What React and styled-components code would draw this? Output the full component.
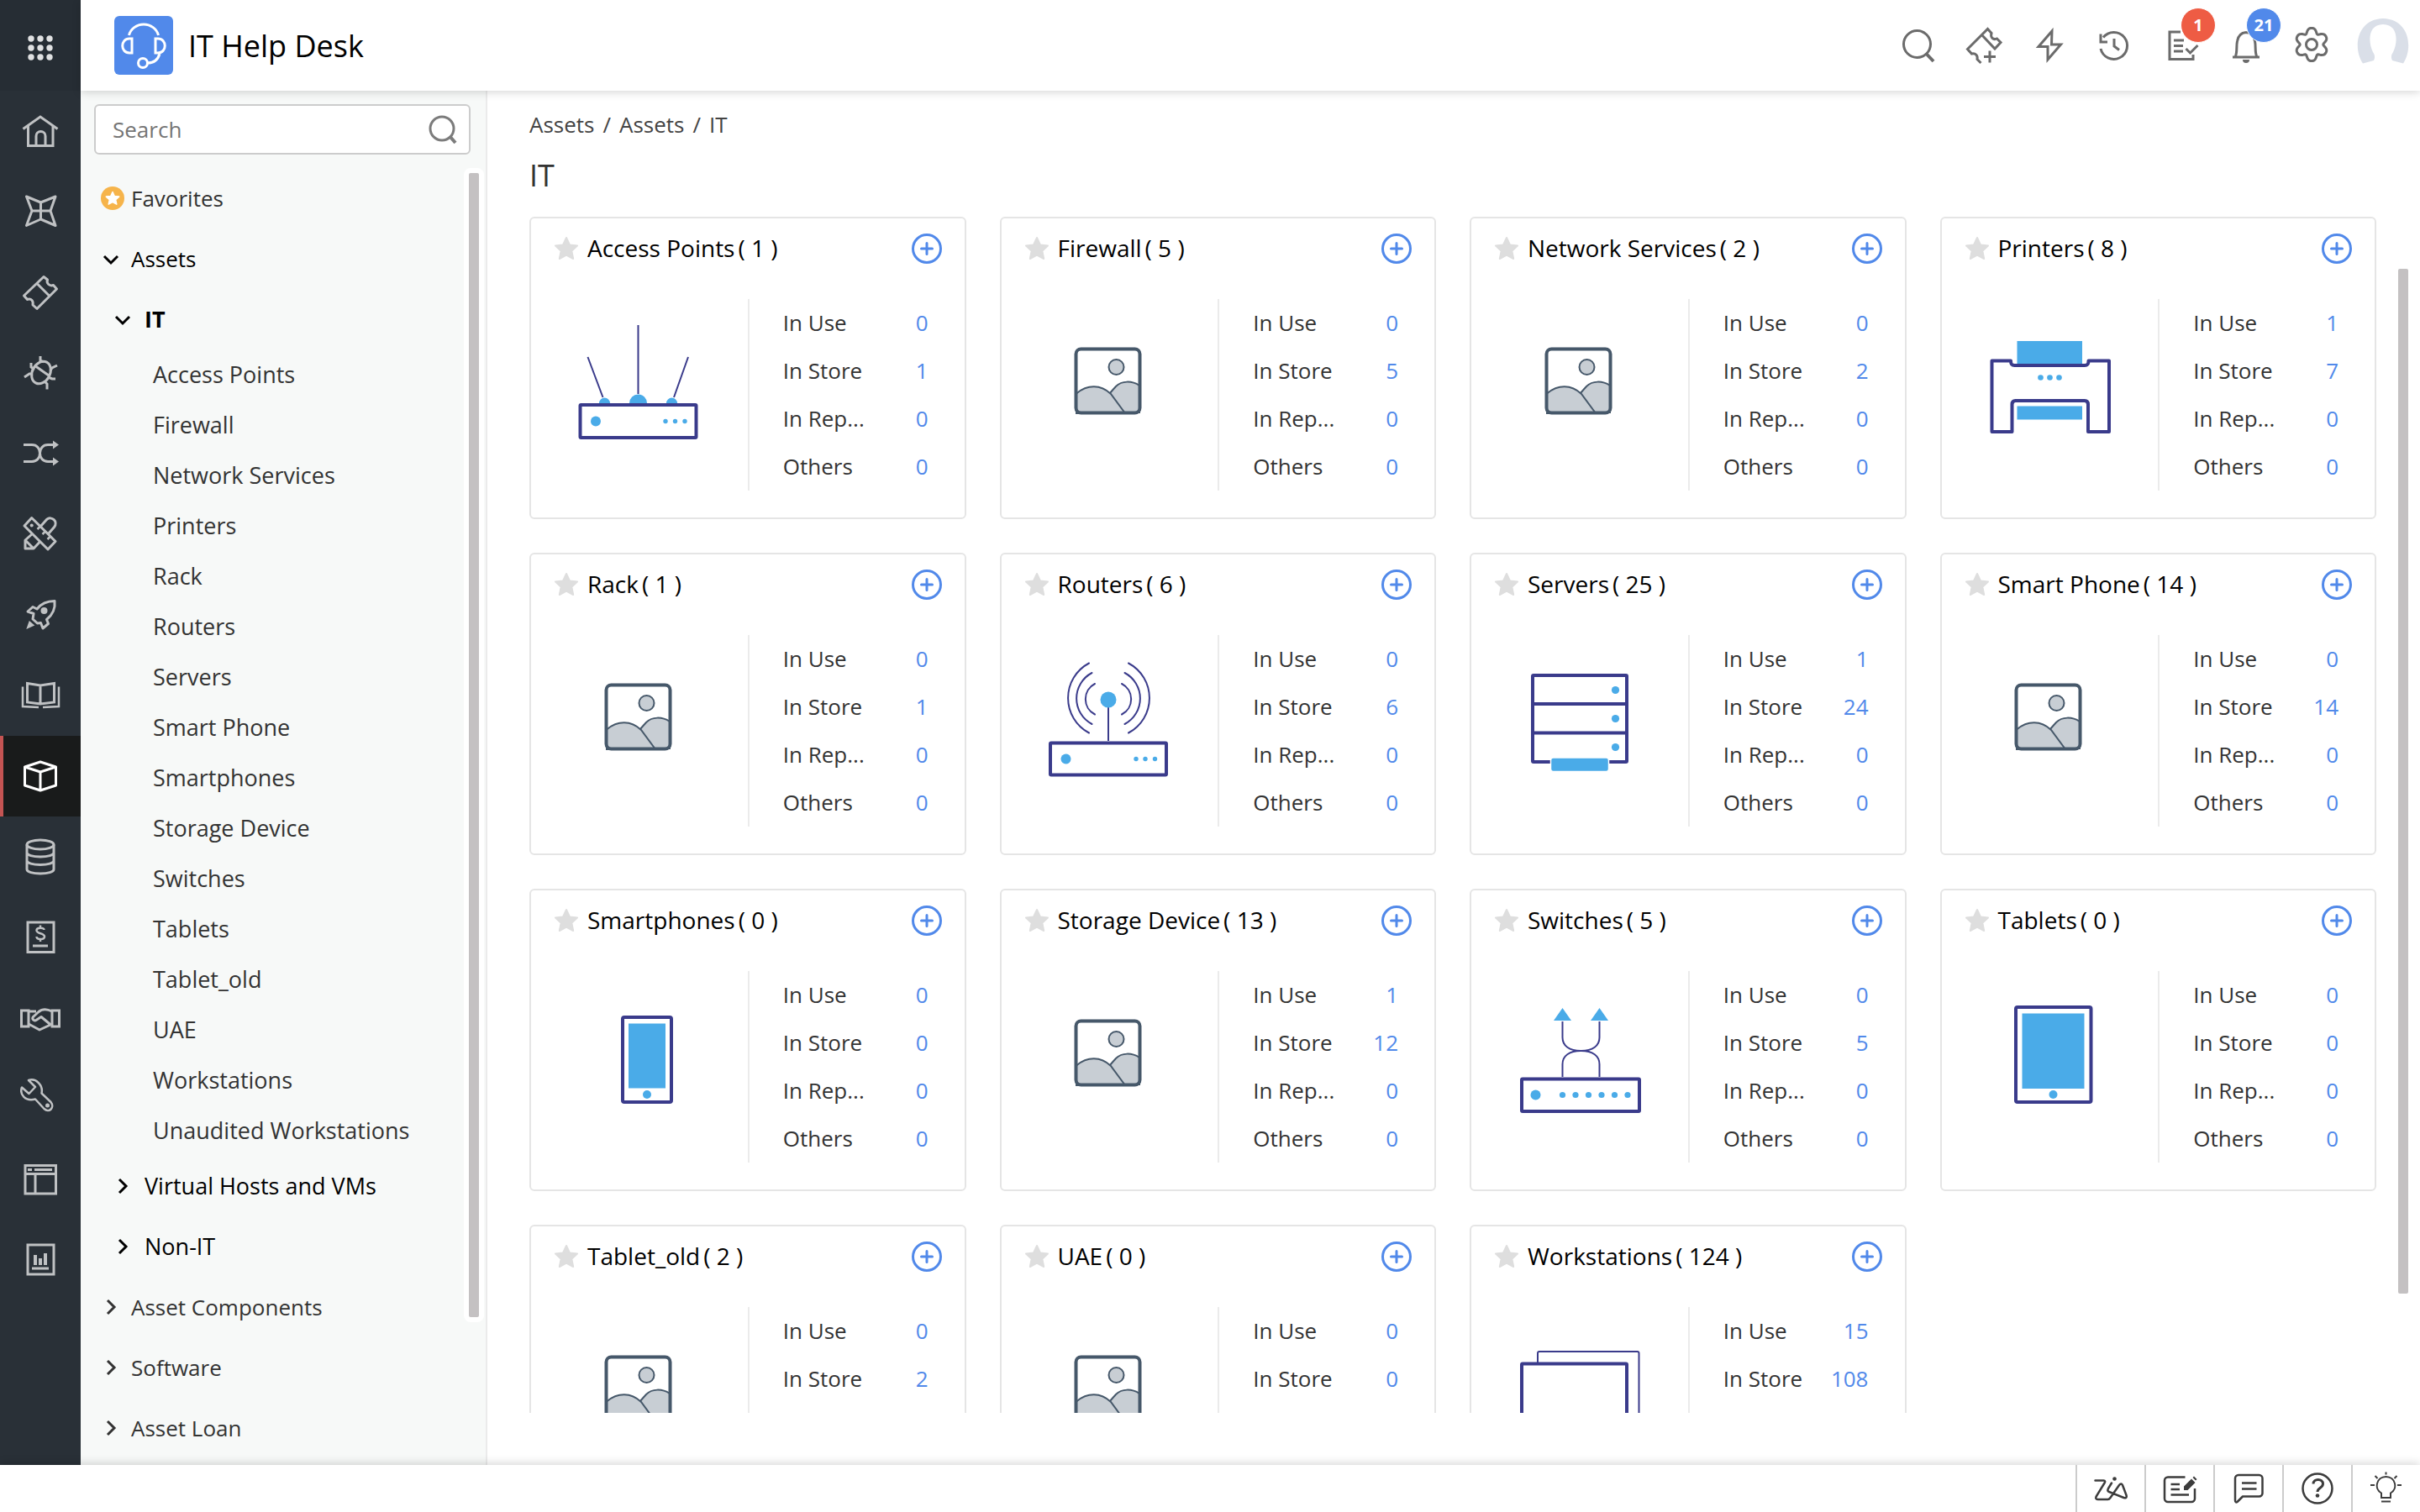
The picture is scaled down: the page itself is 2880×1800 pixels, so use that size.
import React from "react";
import styled, { createGlobalStyle, css } from "styled-components";

const INK = "#3a3b8b";
const SKY = "#4aabe8";
const BLUE = "#5189ea";

const GlobalStyle = createGlobalStyle`
  *, *::before, *::after { box-sizing: border-box; }
  html, body, #root { height: 100%; }
  body {
    margin: 0;
    background: #fff;
    color: #333;
    font-family: "Open Sans", "Noto Sans", sans-serif;
    font-size: 26px;
    line-height: 36px;
    overflow: hidden;
  }
  h1, h2, h3, p, ul, ol, dl, dd, dt { margin: 0; padding: 0; font-weight: 400; }
  ul, ol { list-style: none; }
  a { color: inherit; text-decoration: none; }
  button { font: inherit; color: inherit; background: none; border: 0; padding: 0; cursor: pointer; }
  svg { display: block; flex: none; }
`;

/* ---------- shell ---------- */

const Shell = styled.div`
  display: flex;
  flex-direction: column;
  height: 100vh;
`;

const Upper = styled.div`
  display: flex;
  flex: 1;
  min-height: 0;
`;

const Rail = styled.nav`
  display: flex;
  flex-direction: column;
  width: 96px;
  flex: none;
  background: #293037;
  overflow: hidden;
`;

const Launcher = styled.button`
  display: grid;
  place-items: center;
  height: 108px;
  flex: none;
  padding-top: 6px;
  background: #262d34;
  color: #e0e1e2;
`;

const RailButton = styled.button`
  display: grid;
  place-items: center;
  height: 96px;
  flex: none;
  color: #bfc1c3;
  ${(p) =>
    p.$active &&
    css`
      color: #fff;
      background: #191b1b;
      box-shadow: inset 4px 0 0 #c45453;
    `}
`;

const Workspace = styled.div`
  display: flex;
  flex-direction: column;
  flex: 1;
  min-width: 0;
`;

const Header = styled.header`
  display: flex;
  align-items: center;
  height: 108px;
  flex: none;
  padding: 0 12px 0 40px;
  background: #fff;
  box-shadow: 0 2px 10px rgba(0, 0, 0, 0.16);
  z-index: 2;
`;

const Logo = styled.div`
  width: 70px;
  height: 70px;
  border-radius: 6px;
  background: ${BLUE};
  color: #fff;
`;

const Product = styled.h1`
  margin-left: 18px;
  padding-top: 2px;
  color: #000;
  font-size: 36px;
  line-height: 48px;
`;

const Tools = styled.div`
  display: flex;
  align-items: center;
  margin-left: auto;
`;

const ToolButton = styled.button`
  position: relative;
  display: grid;
  place-items: center;
  width: 78px;
  height: 78px;
  color: #6b6b6b;
`;

const Badge = styled.span`
  position: absolute;
  top: -6px;
  right: -3px;
  width: 42px;
  height: 42px;
  border: 1px solid #fff;
  border-radius: 50%;
  background: ${(p) => p.$color};
  color: #fff;
  font-size: 20px;
  font-weight: 700;
  line-height: 40px;
  text-align: center;
`;

const AvatarButton = styled.button`
  margin-left: 14px;
`;

const Columns = styled.div`
  display: flex;
  flex: 1;
  min-height: 0;
`;

/* ---------- side panel ---------- */

const Side = styled.aside`
  display: flex;
  flex-direction: column;
  width: 484px;
  flex: none;
  padding-top: 16px;
  background: #f7f9f8;
  border-right: 2px solid #ebebeb;
`;

const SearchBox = styled.label`
  display: flex;
  align-items: center;
  height: 60px;
  flex: none;
  margin: 0 18px 16px 16px;
  padding: 0 10px 0 20px;
  border: 2px solid #ccc;
  border-radius: 6px;
  background: #fff;
  color: #7c7c7c;
`;

const SearchInput = styled.input`
  flex: 1;
  min-width: 0;
  padding: 0;
  border: 0;
  outline: 0;
  background: none;
  color: #333;
  font: inherit;
  &::placeholder { color: #757575; opacity: 1; }
`;

const TreeArea = styled.div`
  display: flex;
  flex: 1;
  min-height: 0;
`;

const Tree = styled.ul`
  flex: 1;
  min-width: 0;
  overflow: hidden;
`;

const treeDepths = [
  { indent: 24, gap: 12, size: 26 },
  { indent: 38, gap: 14, size: 27 },
  { indent: 86, gap: 0, size: 27 },
];

const TreeLink = styled.a`
  display: flex;
  align-items: center;
  height: ${(p) => (p.$leaf ? 60 : 72)}px;
  padding-left: ${(p) => treeDepths[p.$depth].indent}px;
  gap: ${(p) => (p.$badge ? 8 : treeDepths[p.$depth].gap)}px;
  color: ${(p) => (p.$dark ? "#000" : "#333")};
  font-size: ${(p) => treeDepths[p.$depth].size}px;
  font-weight: ${(p) => (p.$strong ? 700 : 400)};
`;

const SideTrack = styled.div`
  width: 24px;
  height: 89%;
  flex: none;
  margin-right: 2px;
  padding: 6px;
  border-radius: 8px;
  background: #fff;
`;

const Thumb = styled.div`
  width: 12px;
  height: ${(p) => p.$size};
  border-radius: 2px;
  background: #c4c1c2;
`;

/* ---------- main content ---------- */

const Main = styled.main`
  display: flex;
  flex-direction: column;
  flex: 1;
  min-width: 0;
  padding: 20px 0 62px 50px;
`;

const Crumbs = styled.ol`
  display: flex;
  gap: 10px;
  line-height: 40px;
  color: #444;
`;

const Heading = styled.h2`
  margin: 16px 0 24px;
  font-size: 36px;
  line-height: 50px;
`;

const Scroller = styled.div`
  display: flex;
  flex: 1;
  min-height: 0;
`;

const Cards = styled.div`
  display: grid;
  grid-template-columns: repeat(4, minmax(0, 1fr));
  grid-auto-rows: max-content;
  gap: 40px;
  flex: 1;
  overflow: hidden;
`;

const MainTrack = styled.div`
  width: 52px;
  flex: none;
  padding: 62px 14px 78px 26px;
`;

const Card = styled.article`
  border: 2px solid #e5e5e5;
  border-radius: 6px;
  padding-bottom: 32px;
  background: #fff;
`;

const CardHead = styled.div`
  display: flex;
  align-items: center;
  height: 72px;
  margin-bottom: 24px;
  padding: 0 27px;
`;

const StarButton = styled.button`
  margin-right: 10px;
  color: #dedede;
`;

const CardTitle = styled.h3`
  display: flex;
  gap: 4px;
  flex: 1;
  padding-bottom: 2px;
  color: #000;
  font-size: 28px;
  white-space: nowrap;
`;

const AddButton = styled.button`
  color: ${BLUE};
`;

const CardBody = styled.div`
  display: grid;
  grid-template-columns: 1fr 1fr;
`;

const Picture = styled.div`
  display: flex;
  justify-content: center;
  padding-top: 28px;
`;

const Stats = styled.dl`
  border-left: 2px solid #ebebeb;
  padding: 0 43px 0 40px;
`;

const Stat = styled.div`
  display: flex;
  justify-content: space-between;
  line-height: 57px;
`;

const StatValue = styled.dd`
  color: ${BLUE};
`;

/* ---------- footer ---------- */

const Footer = styled.footer`
  display: flex;
  justify-content: flex-end;
  height: 56px;
  flex: none;
  background: #fff;
  box-shadow: 0 -2px 10px rgba(0, 0, 0, 0.16);
  z-index: 3;
`;

const FootButton = styled.button`
  display: grid;
  place-items: center;
  width: 82px;
  border-left: 2px solid #ccc;
  color: #3c3c3c;
`;

/* ---------- icons ---------- */

const Icon = ({ size = 48, w = 3, children, ...rest }) => (
  <svg
    width={size}
    height={size}
    viewBox={`0 0 ${size} ${size}`}
    fill="none"
    stroke="currentColor"
    strokeWidth={w}
    aria-hidden="true"
    {...rest}
  >
    {children}
  </svg>
);

const dots = (points, r, fill = "currentColor") =>
  points.map(([x, y]) => <circle key={`${x}-${y}`} cx={x} cy={y} r={r} fill={fill} stroke="none" />);

const gearPath = (() => {
  const pts = [];
  for (let i = 0; i < 120; i += 1) {
    const a = (i / 120) * Math.PI * 2;
    const r = 17.2 + 2.9 * Math.cos(6 * a) - 0.5 * Math.cos(12 * a);
    pts.push(`${(24 + r * Math.sin(a)).toFixed(2)} ${(23 - r * Math.cos(a)).toFixed(2)}`);
  }
  return `M${pts.join("L")}Z`;
})();

const railItems = [
  ["Home", <><path d="M3.5 21.5 24 7l20.5 14.5" /><path d="M9.5 18v23.5h29.500V18" /><path d="M19 41V30a5.500 5.500 0 0 1 11 0v11" /></>],
  ["Dashboard", <><path strokeLinejoin="round" d="M7.500 6 24.500 13 42 6l-6 17 6 17.500-17.500-7.500-17 7.500L14 23Z" /><path d="M24.500 13v20M14 23h22" /></>],
  ["Requests", <><path strokeLinejoin="round" d="M28 5.500 4.500 28l4 4.500c4.500-1.500 7.500 1.500 6.500 6.500l5 4.500L43.500 20l-4-4.500c-4.500 1.500-8.500-2-7-6.500Z" /><path d="m19.500 13 15 15" /></>],
  ["Problems", <><ellipse cx="25" cy="23.500" rx="10.500" ry="14" transform="rotate(28 25 23.500)" /><path d="m17 15 17 12M24 4v5l4 2M13 12v5l4 3M44 15l-6 3-2 3M5 29l6-4h4M42 31h-4l-5-2M32 43.500V37l-3-3" /></>],
  ["Changes", <><path d="M4 13.500h10c6 0 9.500 4.500 9.500 10s-3.500 10-9.500 10H4M40 13.500h-7c-6 0-9.500 4.500-9.500 10s3.500 10 9.500 10h7" /><path fill="currentColor" stroke="none" d="M39 8.500 46 13.500 39 18.500ZM39 28.500l7 5-7 5Z" /></>],
  ["Projects", <><path strokeLinejoin="round" d="M13.700 4.500 42 32.500 33 42 5 14Z" /><path strokeLinejoin="round" d="M14.500 23.500 6 31v10h10l7-7.500M24 15l7.500-8.500c6-5 14 2.500 9 9L33.500 23.500M7 32l8 8" /><path strokeWidth="2.500" d="m20.500 18 4-4M26.500 24l4-4M32.500 30l4-4" /><circle cx="13.700" cy="13.500" r="2" fill="currentColor" stroke="none" /></>],
  ["Releases", <><path strokeLinejoin="round" d="M41 7.500c-9 0-16 3-21 9.500l-5-2.500-6 5.500 7 2.500-1 6.500 5.500 5 4-.5 2.500 6.500 6.500-5.500-2-5C39 23.500 42 16 41 7.500Z" /><circle cx="28.500" cy="19" r="4" fill="currentColor" stroke="none" /><path fill="currentColor" stroke="none" d="m7.300 41 3.500-10 6.500 5.500Z" /></>],
  ["Solutions", <><path d="M8.500 9.500 24 12l16.500-2.500V32L24 34 8.500 32ZM24 12v22" /><path strokeWidth="2.500" d="M3 13.500V37l19 1M46 13.500V37l-19 1" /></>],
  ["Assets", <><path strokeLinejoin="round" d="M24 7 42.500 13v22L24 41 5.500 35V13ZM5.500 13 24 19l18.500-6M24 19v22" /></>],
  ["CMDB", <><ellipse cx="24" cy="9.500" rx="16" ry="5.500" /><path d="M8 9.500V39c0 3 7 5 16 5s16-2 16-5V9.500M8 19c0 3 7 5 16 5s16-2 16-5M8 28.500c0 3 7 5 16 5s16-2 16-5" /></>],
  ["Purchase", <><path d="M9 6h31v35.500H9ZM15 34h18" /><path strokeWidth="2.500" d="M28.500 15c0-3-9-3.500-9 .5 0 4.500 9.500 3 9.500 7.500 0 4-9.500 4-9.500 0M24 9.500v3M24 26v3" /></>],
  ["Contracts", <><path d="M1.500 15h8.500v19H1.500ZM38 15h8.500v19H38Z" /><path strokeLinejoin="round" d="M10 16h9M10 31l13 7 13-6M38 16c-6-3-12-3-16 .5l-6.500 6c-2 2.500 1 5.500 3.500 4l6-4 12 10" /></>],
  ["Maintenance", <><path strokeWidth="2.500" strokeLinejoin="round" d="M10 2 18 10l-7.500 8L2 10.500C-1 19 6 27.500 18 24.500L28.500 36c6 5.500 13-1.500 8-8L25.500 17.500C27.500 8 19-1 10 2Z" /><circle cx="32.500" cy="32" r="2.500" fill="currentColor" stroke="none" /></>],
  ["Custom modules", <path key="p" d="M6 7.500h36.500V41H6ZM6 17.500h36.500M18 17.500V41M9 12.500h5M17 12.500h21" />],
  ["Reports", <><path d="M9 6h31v35H9ZM14 34h20" /><path fill="currentColor" stroke="none" d="M16 18h4v12h-4ZM22 22h4v8h-4ZM28 16h4v14h-4Z" /></>],
];

const tools = [
  { name: "Search", art: <><circle cx="22.500" cy="22.500" r="16" /><path strokeWidth="4" d="m33.500 34 8.500 9" /></> },
  { name: "New request", art: <><path d="M20.500 45 16 40.500c1-4.500-2-7.500-6.500-6.500l-5-5.500L28.500 4.500l4.500 5c-1.500 5 2 8.500 6.500 6.500l4.500 4.500-7 7.500-16-17" /><path d="M31 30.500v14M24 37.500h14" /></> },
  { name: "Quick actions", art: <path d="M27 7 11 25.500h11V41L37.500 23h-11Z" /> },
  { name: "History", art: <><path d="M7 28a16 16 0 1 0 3-13.500" /><path d="M7 10.500v9.500h8" /><path d="M23 16v9l6 4.500" /></> },
  { name: "Tasks", badge: "1", color: "#ee5c44", art: <><path d="M24 8H11v32.500h28V35" /><path d="M16 18h12M16 24.500h11M16 31h11" /><path d="m30.500 28 5 5 9-9" /></> },
  { name: "Notifications", badge: "21", color: BLUE, art: <><path d="M8 38h32M11 38c3-6 1-12 2.500-19C14.500 13 18 9 24 8.500M37 38c-3-6-1-12-2.500-19-1-6-5-10-10.500-10.500" /><path fill="currentColor" stroke="none" d="M20 41h8a4 4 0 0 1-8 0Z" /></> },
  { name: "Settings", art: <><path d={gearPath} strokeLinejoin="round" /><circle cx="24" cy="23" r="6.500" /></> },
];

const footItems = [
  ["Zia", <><path strokeLinecap="round" strokeLinejoin="round" d="M3.500 12.500h10c2 0 2 1.500 1 3L5 31c-1.500 2.500-.5 4 1.500 4h12c1.500 0 2-.5 3-2l10.500-15c1.500-2 3-2 4 0l4.500 12c.8 2.500-.5 4-3 3L20 26c-2-.8-2-2-1-4l4-6.500" /><circle cx="26.500" cy="10.500" r="2.300" fill="currentColor" stroke="none" /></>],
  ["Notes", <><path d="M28.500 8.500H8a4 4 0 0 0-4 4V34a4 4 0 0 0 4 4h28a4 4 0 0 0 4-4V22" /><path d="M11.500 17H22M11.500 23H22M11.500 29.500H33" /><path fill="currentColor" stroke="none" d="M27 24v-4.500l9-9 4.500 4.500-9 9ZM37.500 9 39 7.500 42.500 11 41 12.500Z" /></>],
  ["Chat", <><path strokeLinejoin="round" d="M6 35V10a4 4 0 0 1 4-4h24.500a4 4 0 0 1 4 4v17.500a4 4 0 0 1-4 4H15L8.500 38C7 39 6 38 6 36Z" /><path d="M14 15.500h17.500M14 22.500h17.500" /></>],
  ["Help", <><circle cx="22" cy="22" r="17.500" /><path strokeWidth="3" d="M17 16.500c0-7 11.500-6.500 11.500 0 0 5-6.500 4.500-6.500 9.500" /><circle cx="22" cy="30.500" r="2.300" fill="currentColor" stroke="none" /></>],
  ["Tips", <><path strokeWidth="2" d="M16 33v-5.500c-9-5-6-19.500 5.500-19.500s14.500 14.500 5.500 19.500V33ZM16 37.500h11M3 18h5M35 18h5M21.500 2.500v3M8.500 7l3 3M34.500 7l-3 3" /></>],
];

const art = {
  placeholder: (
    <g stroke="#46586a" fill="#c8ced4" strokeWidth="2">
      <circle cx="88.500" cy="53" r="9" />
      <path d="M80 107V85l8-9c7-7 19-7 28-1v32Z" />
      <path d="M41 84.500c13-11 29-11 41 .5l17 23H41Z" />
      <rect x="40.500" y="31.500" width="76" height="76" rx="6" fill="none" strokeWidth="4" />
    </g>
  ),
  accessPoint: (
    <g stroke={INK}>
      <g fill={SKY} stroke="none">
        <path d="M32 96a6.500 6.500 0 0 1 13 0ZM68 96a10.500 10.500 0 0 1 21 0ZM112 96a6.500 6.500 0 0 1 13 0Z" />
      </g>
      <path strokeWidth="2" d="M78.500 3v82M18.500 41l18 48M138 41l-17 48" />
      <rect x="9.500" y="98" width="138" height="39" rx="1" strokeWidth="4" />
      {dots([[28, 117.5]], 6, SKY)}
      {dots([[111, 117.5], [122.5, 117.5], [134, 117.5]], 2.700, SKY)}
    </g>
  ),
  printer: (
    <g stroke={INK}>
      <path fill={SKY} stroke="none" d="M41.500 22H119v27H41.500ZM41.500 99.500H119v16H41.500Z" />
      <path
        strokeWidth="4"
        strokeLinejoin="round"
        d="M11.500 45.500H34c0 4 1 5.500 4.500 5.500H122c3.500 0 4.500-1.500 4.500-5.500H151V130H126V97.500c0-3-1-4.500-4-4.500H39.500c-3 0-4 1.500-4 4.500V130h-24Z"
      />
      {dots([[69.5, 65.5], [80.5, 65.5], [91.5, 65.5]], 3.300, SKY)}
    </g>
  ),
  router: (
    <g stroke={INK}>
      <path strokeWidth="2" d="M79 58v40" />
      <g strokeWidth="2" strokeLinecap="round">
        <path d="M56 5.500a47 47 0 0 0 0 83M59.500 17a34.500 34.500 0 0 0 0 61M63 30a20.500 20.500 0 0 0 0 36.500" />
        <path d="M103 5.500a47 47 0 0 1 0 83M98.500 17a34.500 34.500 0 0 1 0 61M95 30a20.500 20.500 0 0 1 0 36.500" />
      </g>
      <circle cx="79" cy="49" r="9.500" fill={SKY} stroke="none" />
      <rect x="10" y="100.500" width="138" height="38" rx="1" strokeWidth="4" />
      {dots([[28.5, 119.5]], 6, SKY)}
      {dots([[112, 119.5], [123, 119.5], [134.5, 119.5]], 2.700, SKY)}
    </g>
  ),
  server: (
    <g stroke={INK} strokeWidth="4">
      <rect x="24" y="20" width="112" height="103" rx="1" />
      <path d="M24 54h112M24 88.500h112" />
      {dots([[122.5, 37.5], [122.5, 71.5], [122.5, 105.5]], 4.600, SKY)}
      <rect x="45.500" y="118" width="69" height="16.500" rx="3" fill={SKY} stroke="#fff" strokeWidth="1.500" />
    </g>
  ),
  phone: (
    <g stroke={INK} strokeWidth="4">
      <rect x="60" y="27" width="58" height="101" rx="2" />
      <rect x="67" y="34.500" width="44" height="77" fill={SKY} stroke="none" />
      {dots([[89, 119]], 5, SKY)}
    </g>
  ),
  switch: (
    <g stroke={INK}>
      <path strokeWidth="2" d="M59.500 32v19c0 10 8 16 22 16s22-6 22-16V32M59.500 98V83c0-10 8-16 22-16s22 6 22 16v15" />
      <path fill={SKY} stroke="none" d="M59.500 16 70 31H49ZM103.500 16 114 31H93Z" />
      <rect x="11" y="100.500" width="140" height="38.500" rx="1" strokeWidth="4" />
      {dots([[27.5, 119.5]], 6, SKY)}
      {dots([59.5, 75, 90.5, 106, 121.5, 137].map((x) => [x, 119.5]), 3.600, SKY)}
    </g>
  ),
  tablet: (
    <g stroke={INK} strokeWidth="4">
      <rect x="40" y="15" width="89.500" height="113" rx="2" />
      <rect x="47.500" y="22.500" width="74" height="89.500" fill={SKY} stroke="none" />
      {dots([[84.5, 119]], 5, SKY)}
    </g>
  ),
  workstation: (
    <g stroke={INK}>
      <rect x="30" y="25" width="120.500" height="100" rx="2" strokeWidth="2" />
      <rect x="11" y="39.500" width="125" height="98" rx="1" strokeWidth="4" fill="#fff" />
    </g>
  ),
};

const Chevron = ({ open }) => (
  <Icon size={24} w={3}>
    {open ? <path d="m4 9 8 8 8-8" /> : <path d="m8 4 8 8-8 8" />}
  </Icon>
);

const FavoriteMark = () => (
  <Icon size={28} stroke="none">
    <circle cx="14" cy="14" r="14" fill="#f6b44b" />
    <path fill="#fff" stroke="#fff" strokeWidth="1.500" strokeLinejoin="round" d="m14 6.500 2.300 5 5.400.6-4 3.700 1.100 5.400L14 18.500l-4.800 2.700 1.100-5.400-4-3.700 5.400-.6Z" />
  </Icon>
);

/* ---------- data ---------- */

const assetTypes = [
  "Access Points", "Firewall", "Network Services", "Printers", "Rack", "Routers", "Servers",
  "Smart Phone", "Smartphones", "Storage Device", "Switches", "Tablets", "Tablet_old", "UAE",
  "Workstations", "Unaudited Workstations",
];

const cards = [
  ["Access Points", 1, "accessPoint", [0, 1, 0, 0]],
  ["Firewall", 5, "placeholder", [0, 5, 0, 0]],
  ["Network Services", 2, "placeholder", [0, 2, 0, 0]],
  ["Printers", 8, "printer", [1, 7, 0, 0]],
  ["Rack", 1, "placeholder", [0, 1, 0, 0]],
  ["Routers", 6, "router", [0, 6, 0, 0]],
  ["Servers", 25, "server", [1, 24, 0, 0]],
  ["Smart Phone", 14, "placeholder", [0, 14, 0, 0]],
  ["Smartphones", 0, "phone", [0, 0, 0, 0]],
  ["Storage Device", 13, "placeholder", [1, 12, 0, 0]],
  ["Switches", 5, "switch", [0, 5, 0, 0]],
  ["Tablets", 0, "tablet", [0, 0, 0, 0]],
  ["Tablet_old", 2, "placeholder", [0, 2]],
  ["UAE", 0, "placeholder", [0, 0]],
  ["Workstations", 124, "workstation", [15, 108]],
];

const statNames = ["In Use", "In Store", "In Rep...", "Others"];

function TreeRow({ label, open, ...look }) {
  return (
    <li>
      <TreeLink href="#" {...look}>
        {!look.$leaf && <Chevron open={open} />}
        {label}
      </TreeLink>
    </li>
  );
}

function AssetCard({ name, count, picture, values }) {
  return (
    <Card>
      <CardHead>
        <StarButton aria-label={`Favorite ${name}`}>
          <Icon size={30} w={2}>
            <path fill="currentColor" strokeLinejoin="round" d="m15 2 4 8.500 9 1-6.700 6.200 1.900 9.300L15 22.500 6.800 27l1.900-9.300L2 11.500l9-1Z" />
          </Icon>
        </StarButton>
        <CardTitle>
          <a href="#">{name}</a>
          <span>( {count} )</span>
        </CardTitle>
        <AddButton aria-label={`Add ${name}`}>
          <Icon size={36}>
            <circle cx="18" cy="18" r="16.500" />
            <path strokeLinecap="round" d="M18 11.500v13M11.500 18h13" />
          </Icon>
        </AddButton>
      </CardHead>
      <CardBody>
        <Picture>
          <Icon size={160}>{art[picture]}</Icon>
        </Picture>
        <Stats>
          {values.map((value, i) => (
            <Stat key={statNames[i]}>
              <dt>{statNames[i]}</dt>
              <StatValue><a href="#">{value}</a></StatValue>
            </Stat>
          ))}
        </Stats>
      </CardBody>
    </Card>
  );
}

export default function App() {
  return (
    <Shell>
      <GlobalStyle />
      <Upper>
        <Rail aria-label="Modules">
          <Launcher aria-label="All apps">
            <Icon size={32}>
              {dots([5, 16, 27].flatMap((y) => [5, 16, 27].map((x) => [x, y])), 3.700)}
            </Icon>
          </Launcher>
          {railItems.map(([name, drawing]) => (
            <RailButton key={name} aria-label={name} $active={name === "Assets"}>
              <Icon>{drawing}</Icon>
            </RailButton>
          ))}
        </Rail>
        <Workspace>
          <Header>
            <Logo>
              <Icon size={70}>
                <path d="M17.500 23a18 17 0 0 1 35 0" />
                <path d="M21 27v17h-3c-11 0-11-17 0-17ZM49 27v17h3c11 0 11-17 0-17Z" />
                <circle cx="34" cy="56" r="5.500" />
                <path d="M54 45c-2 7-7 11-14.500 11" />
              </Icon>
            </Logo>
            <Product>IT Help Desk</Product>
            <Tools>
              {tools.map((tool) => (
                <ToolButton key={tool.name} aria-label={tool.name}>
                  <Icon>{tool.art}</Icon>
                  {tool.badge && <Badge $color={tool.color}>{tool.badge}</Badge>}
                </ToolButton>
              ))}
              <AvatarButton aria-label="Account">
                <Icon size={64} stroke="none">
                  <path fill="#dadfe8" d="M8 53.500C-4 36 0 1 32 0c32 1 36 36 24 53.500L43 50c-2-4-1-7 1-10 6-12 6-33-12-33S14 28 20 40c2 3 3 6 1 10Z" />
                </Icon>
              </AvatarButton>
            </Tools>
          </Header>
          <Columns>
            <Side>
              <SearchBox>
                <SearchInput type="text" placeholder="Search" aria-label="Search" />
                <Icon size={40}>
                  <circle cx="18" cy="19" r="14" />
                  <path strokeWidth="4" d="m27 28 7 8" />
                </Icon>
              </SearchBox>
              <TreeArea>
                <Tree>
                  <li>
                    <TreeLink href="#" $depth={0} $badge>
                      <FavoriteMark />
                      Favorites
                    </TreeLink>
                  </li>
                  <TreeRow label="Assets" open $depth={0} $dark />
                  <TreeRow label="IT" open $depth={1} $dark $strong />
                  {assetTypes.map((name) => (
                    <TreeRow key={name} label={name} $depth={2} $leaf />
                  ))}
                  <TreeRow label="Virtual Hosts and VMs" $depth={1} $dark />
                  <TreeRow label="Non-IT" $depth={1} $dark />
                  <TreeRow label="Asset Components" $depth={0} />
                  <TreeRow label="Software" $depth={0} />
                  <TreeRow label="Asset Loan" $depth={0} />
                </Tree>
                <SideTrack>
                  <Thumb $size="100%" />
                </SideTrack>
              </TreeArea>
            </Side>
            <Main>
              <Crumbs>
                <li><a href="#">Assets</a></li>
                <li>/</li>
                <li><a href="#">Assets</a></li>
                <li>/</li>
                <li>IT</li>
              </Crumbs>
              <Heading>IT</Heading>
              <Scroller>
                <Cards>
                  {cards.map(([name, count, picture, values]) => (
                    <AssetCard key={name} name={name} count={count} picture={picture} values={values} />
                  ))}
                </Cards>
                <MainTrack>
                  <Thumb $size="95%" />
                </MainTrack>
              </Scroller>
            </Main>
          </Columns>
        </Workspace>
      </Upper>
      <Footer>
        {footItems.map(([name, drawing]) => (
          <FootButton key={name} aria-label={name}>
            <Icon size={44} w={2.500}>{drawing}</Icon>
          </FootButton>
        ))}
      </Footer>
    </Shell>
  );
}
